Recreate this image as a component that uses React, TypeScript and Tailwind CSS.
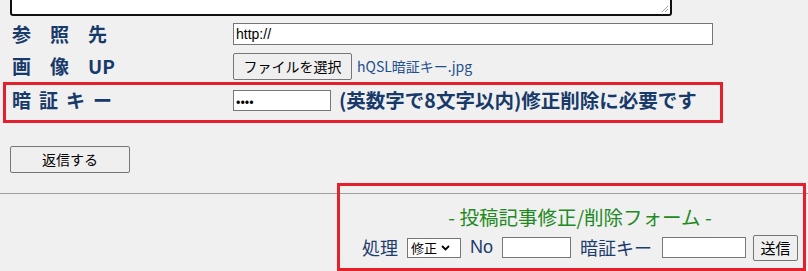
const label = "w-[233px] pl-[12px] text-[19px] font-bold text-[#173a6a]";

export default function App() {
  return (
    <div className="relative w-[808px] h-[271px] overflow-hidden bg-[#f0f0f0] font-['Noto_Sans_CJK_JP','Liberation_Sans',sans-serif]">
      {/* textarea tail */}
      <div className="absolute left-[10px] top-[-40px] w-[662px] h-[56px] rounded-[3px] border-2 border-[#101010] bg-white">
        <svg className="absolute right-[1px] bottom-[1px]" width="9" height="9" viewBox="0 0 9 9">
          <path d="M8 2L2 8M8 5L5 8" stroke="#9a9a9a" strokeWidth="1" />
        </svg>
      </div>

      <div className="flex flex-col pt-[23px]">
        <div className="flex items-center h-[22px]">
          <span className={`${label} tracking-[19px]`}>参照先</span>
          <input
            defaultValue="http://"
            className="w-[480px] h-[22px] border border-[#767676] bg-white px-[2px] text-[14px] text-black font-['Liberation_Sans',sans-serif] outline-none"
          />
        </div>

        <div className="flex items-center h-[27px] mt-[8px]">
          <span className={label}>
            <span className="tracking-[19px]">画像</span>UP
          </span>
          <button className="h-[27px] w-[119px] rounded-[2px] border border-[#767676] bg-[#efefef] text-[14px] text-black">
            ファイルを選択
          </button>
          <span className="ml-[5px] text-[14px] text-[#1f4f8f]">hQSL暗証キー.jpg</span>
        </div>

        <div className="flex items-center h-[22px] mt-[9px]">
          <span className={`${label} tracking-[8px]`}>暗証キー</span>
          <input
            type="password"
            defaultValue="abcd"
            className="w-[98px] h-[21px] border border-[#767676] bg-white px-[2px] text-[13px] outline-none"
          />
          <span className="ml-[8px] text-[19.5px] font-bold text-[#173a6a]">(英数字で8文字以内)修正削除に必要です</span>
        </div>

        <div className="pl-[10px] mt-[35px]">
          <button className="h-[27px] w-[120px] rounded-[2px] border border-[#767676] bg-[#efefef] text-[14px] text-black">
            返信する
          </button>
        </div>

        <hr className="mt-[20px] border-t border-[#a0a0a0]" />

        <div className="ml-[360px] flex flex-col items-center w-[440px]">
          <div className="mt-[8px] text-[19.5px] text-[#1f8a1f]">- 投稿記事修正/削除フォーム -</div>
          <div className="flex items-center mt-[3px] text-[18px] text-[#1d3d6e]">
            <span>処理</span>
            <div className="ml-[9px] flex items-center h-[20px] w-[54px] border border-[#767676] bg-white pl-[3px] text-[13px] text-black">
              修正
              <svg className="ml-[4px]" width="9" height="6" viewBox="0 0 9 6">
                <path d="M1 1l3.5 3.5L8 1" stroke="black" strokeWidth="1.8" fill="none" />
              </svg>
            </div>
            <span className="ml-[9px] font-['Liberation_Sans',sans-serif]">No</span>
            <input className="ml-[9px] w-[69px] h-[21px] border border-[#767676] bg-white outline-none" />
            <span className="ml-[9px]">暗証キー</span>
            <input className="ml-[10px] w-[84px] h-[21px] border border-[#767676] bg-white outline-none" />
            <button className="ml-[7px] h-[26px] w-[45px] rounded-[2px] border border-[#767676] bg-[#efefef] text-[15px] text-black">
              送信
            </button>
          </div>
        </div>
      </div>

      {/* annotation boxes */}
      <div className="absolute left-[3px] top-[82px] w-[720px] h-[41px] border-[3px] border-[#e3202b]" />
      <div className="absolute left-[337px] top-[183px] w-[469px] h-[88px] border-[3px] border-[#e3202b]" />
    </div>
  );
}
